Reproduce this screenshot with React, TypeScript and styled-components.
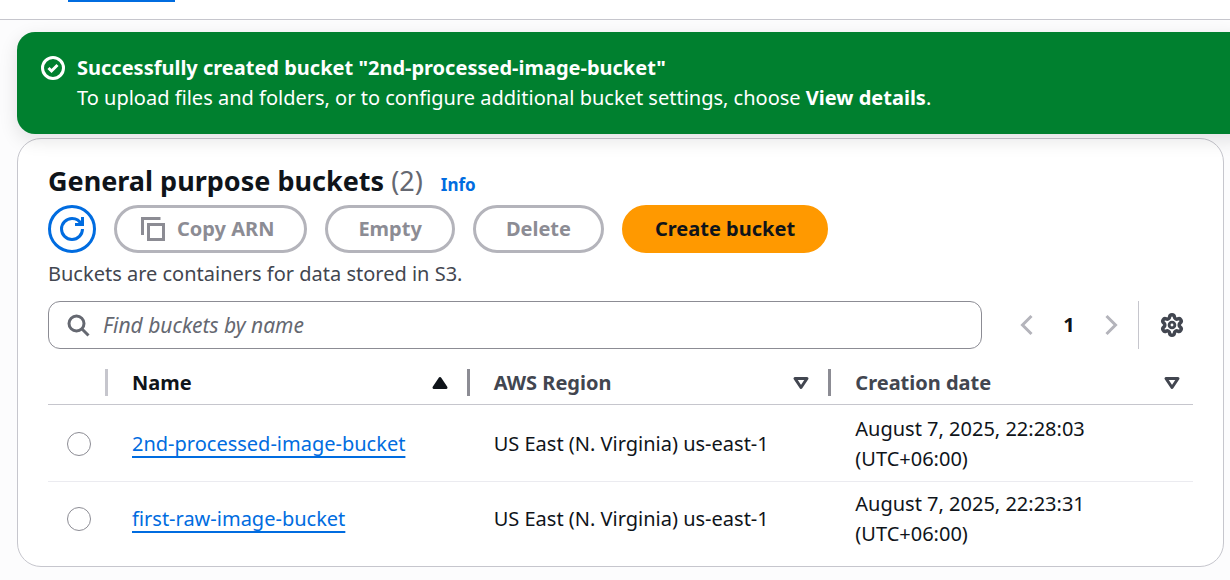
import React, { useState } from "react";
import styled, { createGlobalStyle, css } from "styled-components";

const GlobalStyle = createGlobalStyle`
  *, *::before, *::after { box-sizing: border-box; }
  body {
    margin: 0;
    background: #fcfcfd;
    color: #0f141a;
    font-family: "Noto Sans", "Open Sans", sans-serif;
    font-size: 20px;
    line-height: 30px;
  }
  button, input { font: inherit; }
`;

const Page = styled.div`
  overflow-x: hidden;
`;

const TabBar = styled.header`
  height: 20px;
  padding-left: 68px;
  background: #fff;
  border-bottom: 1px solid #c6c6cd;
`;

const ActiveTab = styled.div`
  width: 107px;
  height: 2px;
  background: #006ce0;
`;

const Main = styled.main`
  padding: 12px 6px 12px 17px;
`;

const Flash = styled.section`
  position: relative;
  z-index: 1;
  display: flex;
  gap: 12px;
  margin-right: -30px;
  padding: 21px 24px;
  border-radius: 18px;
  background: #00802f;
  color: #fff;
  box-shadow: 0 6px 18px 1px rgba(0, 7, 22, 0.1);

  svg { margin-top: 3px; }
  p { margin: 0; }
`;

const Card = styled.section`
  margin-top: 4px;
  padding: 24px 30px 9px;
  border: 1px solid #c6c6cd;
  border-radius: 24px;
  background: #fff;
`;

const TitleRow = styled.div`
  display: flex;
  align-items: baseline;
  gap: 18px;
`;

const Title = styled.h1`
  margin: 0;
  font-size: 27px;
  line-height: 36px;
  font-weight: 700;
`;

const Count = styled.span`
  color: #656871;
  font-weight: 400;
`;

const InfoLink = styled.a`
  color: #006ce0;
  font-size: 17px;
  font-weight: 700;
  text-decoration: none;
`;

const Actions = styled.div`
  display: flex;
  gap: 18px;
  margin-top: 5px;
`;

const Button = styled.button<{ $kind: "normal" | "primary" | "icon" }>`
  display: inline-flex;
  align-items: center;
  justify-content: center;
  gap: 12px;
  height: 48px;
  padding: 0 30px;
  border: 3px solid #006ce0;
  border-radius: 24px;
  background: #fff;
  color: #006ce0;
  font-weight: 700;
  white-space: nowrap;

  &:disabled {
    border-color: #b4b4bb;
    color: #8c8c94;
  }

  ${({ $kind }) => $kind === "primary" && css`
    border-color: #ff9900;
    background: #ff9900;
    color: #0f141a;
  `}

  ${({ $kind }) => $kind === "icon" && css`
    width: 48px;
    padding: 0;
  `}
`;

const CopyLabel = styled.span`
  display: inline-flex;
  align-items: center;
  gap: 12px;
  margin-left: -6px;
`;

const Description = styled.p`
  margin: 6px 0 12px;
  color: #424650;
`;

const Tools = styled.div`
  display: flex;
  align-items: center;
`;

const SearchField = styled.label`
  display: flex;
  flex: 1;
  align-items: center;
  gap: 13px;
  height: 48px;
  padding: 0 17px;
  border: 1px solid #8c8c94;
  border-radius: 12px;
  color: #656871;

  input {
    flex: 1;
    min-width: 0;
    padding: 0;
    border: 0;
    outline: 0;
    background: transparent;
    color: #0f141a;
    font-size: 21px;
  }
  input::placeholder {
    color: #656871;
    font-style: italic;
    opacity: 1;
  }
`;

const Pagination = styled.nav`
  display: flex;
  align-items: center;
  gap: 18px;
  margin-left: 33px;
`;

const PlainButton = styled.button`
  display: flex;
  justify-content: center;
  min-width: 24px;
  padding: 0;
  border: 0;
  background: none;
  color: #424650;
  font-weight: 700;

  &:disabled { color: #b4b4bb; }
  &[aria-current] { color: #0f141a; }
`;

const Preferences = styled.div`
  display: flex;
  align-items: center;
  height: 48px;
  margin-left: 15px;
  padding: 0 9px 0 21px;
  border-left: 1px solid #c6c6cd;
`;

const Table = styled.table`
  width: 100%;
  margin-top: 11px;
  border-collapse: separate;
  border-spacing: 0;
  table-layout: fixed;
`;

const HeadCell = styled.th<{ $divider?: string; $narrow?: boolean }>`
  width: ${({ $narrow }) => ($narrow ? "60px" : "auto")};
  height: 45px;
  padding: 0 0 8px;
  border-bottom: 1px solid #c6c6cd;
  vertical-align: bottom;
  text-align: left;

  > div {
    display: flex;
    align-items: center;
    height: 27px;
    padding: 0 ${({ $divider }) => ($divider ? 15 : 9)}px 0 24px;
    border-right: ${({ $divider }) => ($divider ? `3px solid ${$divider}` : 0)};
  }
`;

const SortButton = styled.button<{ $active?: boolean }>`
  display: flex;
  flex: 1;
  align-items: center;
  justify-content: space-between;
  padding: 0;
  border: 0;
  background: none;
  color: ${({ $active }) => ($active ? "#0f141a" : "#424650")};
  font-weight: 700;
  text-align: left;
`;

const Row = styled.tr`
  td {
    padding: 7px 24px;
    border-bottom: 1px solid #ebebf0;
    vertical-align: middle;
  }
  &:first-child td { padding-top: 9px; }
  td:first-child { padding-left: 19px; }
  &:last-child td { border-bottom-color: transparent; }
`;

const Radio = styled.input`
  display: block;
  appearance: none;
  width: 24px;
  height: 24px;
  margin: 0;
  border: 1px solid #8c8c94;
  border-radius: 50%;
  background: #fff;

  &:checked { border: 8px solid #006ce0; }
`;

const BucketLink = styled.a`
  color: #006ce0;
  text-decoration: underline;
  text-decoration-thickness: 2px;
  text-underline-offset: 5px;
  text-decoration-skip-ink: none;
`;

function Icon({ children, fill = "none", join = "miter" }: {
  children: React.ReactNode;
  fill?: string;
  join?: "miter" | "round";
}) {
  return (
    <svg width="24" height="24" viewBox="0 0 16 16" fill={fill} stroke="currentColor"
      strokeWidth="2" strokeLinejoin={join} aria-hidden="true">
      {children}
    </svg>
  );
}

const SortIcon = ({ active }: { active?: boolean }) => (
  <Icon join="round" fill={active ? "currentColor" : "none"}>
    <path d={active ? "M4 11h8L8 5l-4 6Z" : "M4 5h8l-4 6-4-6Z"} />
  </Icon>
);

const GearIcon = () => (
  <svg width="24" height="24" viewBox="0.3 0.3 23.4 23.4" fill="none" stroke="currentColor"
    strokeWidth="3.4" strokeLinejoin="round" aria-hidden="true">
    <path d="M9.671 4.136a2.34 2.34 0 0 1 4.659 0 2.34 2.34 0 0 0 3.319 1.915 2.34 2.34 0 0 1 2.33 4.033 2.34 2.34 0 0 0 0 3.831 2.34 2.34 0 0 1-2.33 4.033 2.34 2.34 0 0 0-3.319 1.915 2.34 2.34 0 0 1-4.659 0 2.34 2.34 0 0 0-3.32-1.915 2.34 2.34 0 0 1-2.33-4.033 2.34 2.34 0 0 0 0-3.831A2.34 2.34 0 0 1 6.35 6.051a2.34 2.34 0 0 0 3.319-1.915Z" />
    <circle cx="12" cy="12" r="2.8" strokeWidth="2.8" />
  </svg>
);

const buckets = [
  { name: "2nd-processed-image-bucket", region: "US East (N. Virginia) us-east-1", date: "August 7, 2025, 22:28:03", zone: "(UTC+06:00)" },
  { name: "first-raw-image-bucket", region: "US East (N. Virginia) us-east-1", date: "August 7, 2025, 22:23:31", zone: "(UTC+06:00)" },
];

export default function App() {
  const [query, setQuery] = useState("");
  const [selected, setSelected] = useState("");

  return (
    <Page>
      <GlobalStyle />
      <TabBar><ActiveTab /></TabBar>
      <Main>
        <Flash role="status">
          <Icon>
            <circle cx="8" cy="8" r="7" />
            <path d="m5 8 2 2 4-4" />
          </Icon>
          <div>
            <p><strong>Successfully created bucket "2nd-processed-image-bucket"</strong></p>
            <p>To upload files and folders, or to configure additional bucket settings, choose <strong>View details</strong>.</p>
          </div>
        </Flash>

        <Card>
          <TitleRow>
            <Title>General purpose buckets <Count>(2)</Count></Title>
            <InfoLink href="#info">Info</InfoLink>
          </TitleRow>
          <Actions>
            <Button $kind="icon" aria-label="Refresh">
              <Icon>
                <path d="M10 5h5V0" />
                <path d="M15 8a7 7 0 0 1-7 7 7 7 0 0 1-7-7 7 7 0 0 1 7-7 6.9 6.9 0 0 1 6.3 4" />
              </Icon>
            </Button>
            <Button $kind="normal" disabled>
              <CopyLabel>
                <Icon>
                  <path d="M1 12V1h12" />
                  <path d="M5 5h10v10H5z" />
                </Icon>
                Copy ARN
              </CopyLabel>
            </Button>
            <Button $kind="normal" disabled>Empty</Button>
            <Button $kind="normal" disabled>Delete</Button>
            <Button $kind="primary">Create bucket</Button>
          </Actions>
          <Description>Buckets are containers for data stored in S3.</Description>

          <Tools>
            <SearchField>
              <Icon>
                <circle cx="7" cy="7" r="5" />
                <path d="m10.5 10.5 4.5 4.5" />
              </Icon>
              <input type="text" aria-label="Find buckets by name" placeholder="Find buckets by name"
                value={query} onChange={(e) => setQuery(e.target.value)} />
            </SearchField>
            <Pagination aria-label="Pages">
              <PlainButton disabled aria-label="Previous page">
                <Icon><path d="M11 2 5 8l6 6" /></Icon>
              </PlainButton>
              <PlainButton aria-current="page">1</PlainButton>
              <PlainButton disabled aria-label="Next page">
                <Icon><path d="m5 2 6 6-6 6" /></Icon>
              </PlainButton>
            </Pagination>
            <Preferences>
              <PlainButton aria-label="Preferences"><GearIcon /></PlainButton>
            </Preferences>
          </Tools>

          <Table>
            <thead>
              <tr>
                <HeadCell $narrow $divider="#c6c6cd"><div /></HeadCell>
                <HeadCell $divider="#8c8c94" aria-sort="ascending">
                  <div><SortButton $active>Name<SortIcon active /></SortButton></div>
                </HeadCell>
                <HeadCell $divider="#8c8c94">
                  <div><SortButton>AWS Region<SortIcon /></SortButton></div>
                </HeadCell>
                <HeadCell>
                  <div><SortButton>Creation date<SortIcon /></SortButton></div>
                </HeadCell>
              </tr>
            </thead>
            <tbody>
              {buckets.map((b) => (
                <Row key={b.name}>
                  <td>
                    <Radio type="radio" name="bucket" aria-label={b.name}
                      checked={selected === b.name} onChange={() => setSelected(b.name)} />
                  </td>
                  <td><BucketLink href={`#${b.name}`}>{b.name}</BucketLink></td>
                  <td>{b.region}</td>
                  <td>{b.date}<br />{b.zone}</td>
                </Row>
              ))}
            </tbody>
          </Table>
        </Card>
      </Main>
    </Page>
  );
}
